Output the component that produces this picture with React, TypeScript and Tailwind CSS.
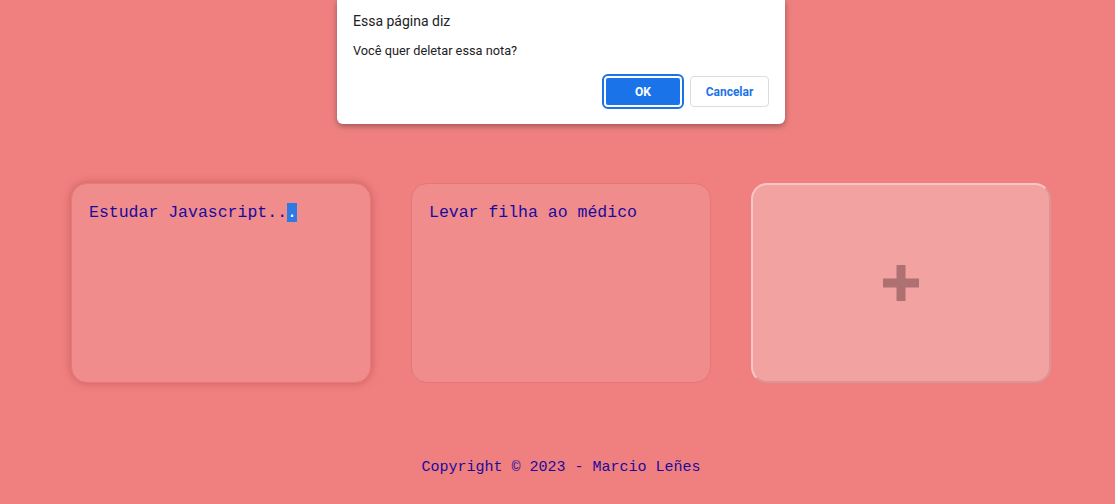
import React from 'react';

const NOTES = ['Estudar Javascript...', 'Levar filha ao médico'];

const App: React.FC = () => {
  return (
    <div className="relative w-full h-[504px] bg-[#f08080] overflow-hidden">
      {/* browser confirm dialog */}
      <div className="absolute left-[337px] top-0 w-[448px] h-[124px] bg-white rounded-b-md shadow-[0_2px_6px_rgba(0,0,0,0.35)] px-4 pt-[11px] font-['Roboto','Noto_Sans',sans-serif] text-[#202124]">
        <p className="text-[14px] leading-5">Essa página diz</p>
        <p className="text-[12.75px] leading-4 mt-[12px]">Você quer deletar essa nota?</p>
        <div className="flex justify-end gap-2 mt-[17px]">
          <button className="w-[78px] h-[31px] rounded bg-[#1a73e8] text-white text-[12px] font-bold border-2 border-white outline-2 outline-[#1a73e8]">
            OK
          </button>
          <button className="w-[79px] h-[31px] rounded bg-white text-[#1a73e8] text-[12px] font-bold border border-[#dadce0]">
            Cancelar
          </button>
        </div>
      </div>

      <main className="flex gap-10 pl-[71px] pt-[183px]">
        {NOTES.map((note, idx) => (
          <div
            key={idx}
            className={
              idx === 0
                ? 'w-[300px] h-[200px] rounded-2xl bg-[#f08c8c] border border-[#e57a7a] shadow-[0_0_10px_rgba(150,40,40,0.4)] px-[17px] pt-[17px]'
                : 'w-[300px] h-[200px] rounded-2xl bg-[#f08c8c] border border-[#e27878] px-[17px] pt-[17px]'
            }
          >
            <p className="font-['Liberation_Mono',monospace] text-[16.5px] leading-6 text-[#1a0a9c] whitespace-pre">
              {idx === 0 ? (
                <>
                  Estudar Javascript..<span className="bg-[#2d7ae5] text-white">.</span>
                </>
              ) : (
                note
              )}
            </p>
          </div>
        ))}
        <button className="w-[300px] h-[200px] rounded-2xl bg-[#f3a2a2] border-2 border-t-[#f8c6c6] border-l-[#f8c6c6] border-b-[#dc9494] border-r-[#dc9494] flex items-center justify-center">
          <svg width="36" height="36" viewBox="0 0 36 36">
            <rect x="13.5" y="0" width="9" height="36" fill="#ae7070" />
            <rect x="0" y="13.5" width="36" height="9" fill="#ae7070" />
          </svg>
        </button>
      </main>

      <footer className="absolute left-0 right-0 top-[458px] text-center font-['Liberation_Mono',monospace] text-[15px] leading-5 text-[#1a0a9c] pl-[7px]">
        Copyright © 2023 - Marcio Leñes
      </footer>
    </div>
  );
};

export default App;
